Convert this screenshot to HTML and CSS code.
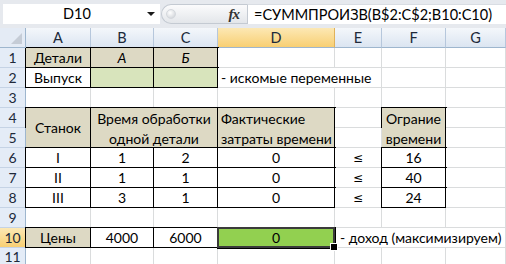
FILE: index.html
```html
<!DOCTYPE html>
<html lang="ru">
<head>
<meta charset="utf-8">
<title>Excel</title>
<link rel="stylesheet" href="styles.css">
</head>
<body>
<div class="fbar">
  <div class="namebox"><span class="ref">D10</span><span class="arrow"></span></div>
  <div class="fxbox"><span class="knob"></span><span class="fx">fx</span></div>
  <div class="formula">=СУММПРОИЗВ(B$2:C$2;B10:C10)</div>
</div>
<div class="sheet">
  <div class="corner"><span class="tri"></span></div>
  <div class="ch">A</div><div class="ch">B</div><div class="ch">C</div><div class="ch sel">D</div><div class="ch">E</div><div class="ch">F</div><div class="ch">G</div>

  <div class="rh">1</div>
  <div class="c bd tan ctr">Детали</div><div class="c bd tan ctr it">А</div><div class="c bd tan ctr it">Б</div><div class="c"></div><div class="c"></div><div class="c"></div><div class="c"></div>

  <div class="rh">2</div>
  <div class="c bd ctr">Выпуск</div><div class="c bd lgreen"></div><div class="c bd lgreen"></div><div class="c span2">- искомые переменные</div><div class="c"></div><div class="c"></div>

  <div class="rh">3</div>
  <div class="c"></div><div class="c"></div><div class="c"></div><div class="c"></div><div class="c"></div><div class="c"></div><div class="c"></div>

  <div class="rh">4</div>
  <div class="c bd tan ctr rows2 mid">Станок</div>
  <div class="c bd tan ctr rows2 span2 wrap">Время обработки<br>одной детали</div>
  <div class="c bd tan rows2 wrap">Фактические<br>затраты времени</div>
  <div class="c"></div>
  <div class="c bd tan ctr rows2 wrap">Ограние<br>времени</div>
  <div class="c"></div>

  <div class="rh">5</div>
  <div class="c"></div><div class="c"></div>

  <div class="rh">6</div>
  <div class="c bd ctr">I</div><div class="c bd ctr">1</div><div class="c bd ctr">2</div><div class="c bd ctr">0</div><div class="c ctr le">≤</div><div class="c bd ctr">16</div><div class="c"></div>

  <div class="rh">7</div>
  <div class="c bd ctr">II</div><div class="c bd ctr">1</div><div class="c bd ctr">1</div><div class="c bd ctr">0</div><div class="c ctr le">≤</div><div class="c bd ctr">40</div><div class="c"></div>

  <div class="rh">8</div>
  <div class="c bd ctr">III</div><div class="c bd ctr">3</div><div class="c bd ctr">1</div><div class="c bd ctr">0</div><div class="c ctr le">≤</div><div class="c bd ctr">24</div><div class="c"></div>

  <div class="rh">9</div>
  <div class="c"></div><div class="c"></div><div class="c"></div><div class="c"></div><div class="c"></div><div class="c"></div><div class="c"></div>

  <div class="rh sel">10</div>
  <div class="c bd tan ctr">Цены</div><div class="c bd ctr">4000</div><div class="c bd ctr">6000</div><div class="c bd green ctr active">0</div><div class="c span3 note">- доход (максимизируем)</div>

  <div class="rh last">11</div>
  <div class="c"></div><div class="c"></div><div class="c"></div><div class="c"></div><div class="c"></div><div class="c"></div><div class="c"></div>
</div>
</body>
</html>
```
FILE: styles.css
```css
* { box-sizing: border-box; margin: 0; padding: 0; }
html, body { width: 506px; height: 264px; overflow: hidden; background: #fff; }
body { font-family: Lato, "Liberation Sans", sans-serif; font-size: 14px; color: #000; }

.fbar { height: 28px; background: #e6e9ee; display: flex; align-items: flex-start; padding-top: 4px; }
.namebox { margin-left: 3px; width: 157px; height: 20px; background: #fff; display: flex; align-items: center; font-size: 14.5px; }
.namebox .ref { flex: 1; text-align: center; line-height: 20px; padding-left: 4px; }
.namebox .arrow { width: 0; height: 0; border-left: 4px solid transparent; border-right: 4px solid transparent; border-top: 4px solid #1a1a1a; margin-right: 5px; }
.fxbox { margin-left: 1px; width: 86px; height: 20px; border-radius: 10px 0 0 10px; background: linear-gradient(#fbfbfc, #e3e6ea); border: 1px solid #c4cad2; border-right: none; display: flex; align-items: center; justify-content: space-between; padding: 0 8px 0 4px; }
.knob { width: 10px; height: 10px; border-radius: 50%; background: radial-gradient(circle at 40% 35%, #ffffff, #c9cdd3); border: 1px solid #d4d8dd; }
.fx { font-family: "Liberation Serif", serif; font-style: italic; font-weight: bold; font-size: 15px; color: #333; letter-spacing: -1px; }
.formula { flex: 1; height: 20px; background: #fff; border-left: 1px solid #c4cad2; border-top: 1px solid #d9dde3; padding-left: 6px; line-height: 19px; white-space: nowrap; overflow: hidden; font-size: 14.5px; }

.sheet { display: grid; grid-template-columns: 26px 65px 63px 64px 117px 47px 64px 60px; grid-auto-rows: 20px; }

.corner { background: #e4ebf5; border-right: 1px solid #9eb6ce; border-bottom: 1px solid #9eb6ce; position: relative; }
.corner .tri { position: absolute; right: 3px; bottom: 3px; width: 0; height: 0; border-left: 11px solid transparent; border-bottom: 11px solid #c5ccd6; }

.ch { background: linear-gradient(#f4f7fb, #dbe5f1); border-right: 1px solid #b6c7dc; border-bottom: 1px solid #9eb6ce; text-align: center; line-height: 19px; color: #20293a; font-size: 14.5px; }
.ch.sel { background: linear-gradient(#fce8b4, #f8cf73); border-right-color: #e0b25a; }

.rh { background: #e4ecf7; border-right: 1px solid #9eb6ce; border-bottom: 1px solid #c5d3e5; text-align: center; line-height: 20px; color: #20293a; }
.rh.sel { background: linear-gradient(#fce8b4, #f8cf73); }
.rh.last { line-height: 17px; }

.c { background: #fff; border-right: 1px solid #dadcdd; border-bottom: 1px solid #dadcdd; line-height: 20px; white-space: nowrap; padding: 0 3px; }
.ctr { text-align: center; }
.it { font-style: italic; }
.le { font-family: "DejaVu Sans", sans-serif; font-size: 12px; }
.bd { border-right-color: #000; border-bottom-color: #000; box-shadow: 0 0 0 1px #000; }
.tan { background: #ddd9c4; }
.lgreen { background: #d8e4bc; }
.green { background: #92d050; }
.span2 { grid-column: span 2; }
.span3 { grid-column: span 3; }
.rows2 { grid-row: span 2; }
.mid { display: flex; align-items: center; justify-content: center; }
.wrap { line-height: 20px; padding-top: 1px; }
.note { padding-left: 5px; }

.active { position: relative; }
.active::after { content: ""; position: absolute; left: -1px; top: -1px; right: -1px; bottom: -1px; border: 2px solid #3b3b3b; }
.active::before { content: ""; position: absolute; right: -4px; bottom: -4px; width: 6px; height: 6px; background: #000; border: 1px solid #fff; z-index: 1; }
```
